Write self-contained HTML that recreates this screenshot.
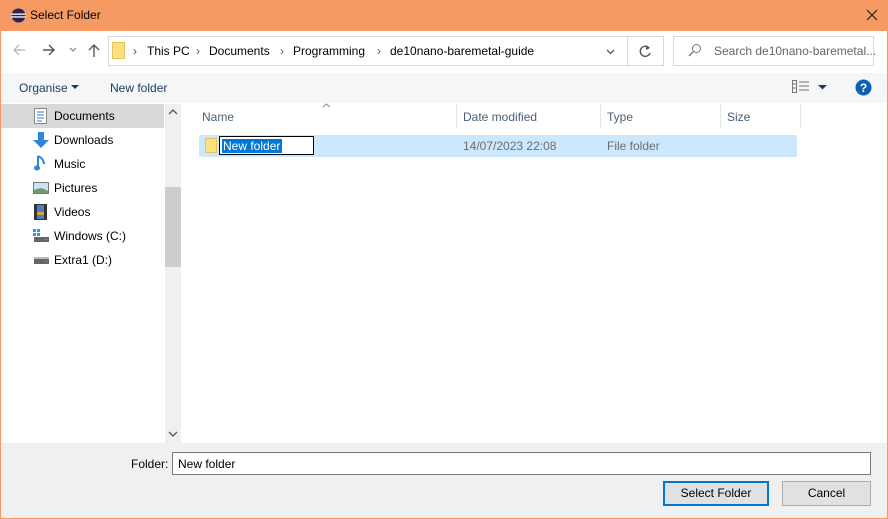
<!DOCTYPE html>
<html><head><style>
*{box-sizing:border-box;margin:0;padding:0}
body{width:888px;height:519px;overflow:hidden;font-family:"Liberation Sans",sans-serif;font-size:12px;color:#000;background:#f69a64;position:relative}
.a{position:absolute}
</style></head><body>
<div class="a" style="left:1px;top:31px;width:886px;height:487px;background:#fff"></div>
<!-- title -->
<svg class="a" style="left:11px;top:8px" width="15" height="15"><circle cx="7.5" cy="7.5" r="7" fill="#2c2255"/><rect x="0" y="5.5" width="15" height="1.3" fill="#fff"/><rect x="0" y="8.3" width="15" height="1.3" fill="#fff"/></svg>
<div class="a" style="left:30px;top:8px;font-size:12px">Select Folder</div>
<svg class="a" style="left:866px;top:9px" width="12" height="12"><path d="M1 1L11 11M11 1L1 11" stroke="#222" stroke-width="1.2"/></svg>
<!-- nav -->
<svg class="a" style="left:12px;top:43px" width="14" height="14"><path d="M13 7H2M7 2L2 7l5 5" stroke="#bbb" stroke-width="1.4" fill="none"/></svg>
<svg class="a" style="left:42px;top:43px" width="14" height="14"><path d="M1 7h11M7 2l5 5-5 5" stroke="#555" stroke-width="1.4" fill="none"/></svg>
<svg class="a" style="left:69px;top:47px" width="8" height="5"><path d="M1 1l3 3 3-3" stroke="#777" fill="none"/></svg>
<svg class="a" style="left:87px;top:43px" width="14" height="15"><path d="M7 14V2M2 7l5-5 5 5" stroke="#555" stroke-width="1.4" fill="none"/></svg>
<div class="a" style="left:108px;top:36px;width:556px;height:30px;border:1px solid #d9d9d9"></div>
<div class="a" style="left:627px;top:36px;width:1px;height:30px;background:#d9d9d9"></div>
<div class="a" style="left:112px;top:42px;width:13px;height:17px;background:#fbe27f;border:1px solid #e3c35a"></div>
<div class="a" style="left:133px;top:44px;color:#555">›</div>
<div class="a" style="left:147px;top:44px">This PC</div>
<div class="a" style="left:196px;top:44px;color:#555">›</div>
<div class="a" style="left:209px;top:44px">Documents</div>
<div class="a" style="left:280px;top:44px;color:#555">›</div>
<div class="a" style="left:293px;top:44px">Programming</div>
<div class="a" style="left:377px;top:44px;color:#555">›</div>
<div class="a" style="left:390px;top:44px">de10nano-baremetal-guide</div>
<svg class="a" style="left:606px;top:49px" width="9" height="6"><path d="M1 1l3.5 3.5L8 1" stroke="#555" stroke-width="1.3" fill="none"/></svg>
<svg class="a" style="left:639px;top:44px" width="13" height="14"><path d="M10 4A5 5 0 1 0 11 9" stroke="#555" stroke-width="1.4" fill="none"/><path d="M7 1l4 3-4 2z" fill="#555"/></svg>
<div class="a" style="left:673px;top:36px;width:201px;height:30px;border:1px solid #d9d9d9"></div>
<svg class="a" style="left:688px;top:43px" width="14" height="14"><circle cx="8.5" cy="5.5" r="4" stroke="#777" fill="none"/><path d="M5.5 8.5L1 13" stroke="#777" stroke-width="1.3"/></svg>
<div class="a" style="left:714px;top:44px;color:#666">Search de10nano-baremetal...</div>
<!-- toolbar -->
<div class="a" style="left:1px;top:73px;width:886px;height:30px;background:#f5f6f7"></div>
<div class="a" style="left:19px;top:81px;color:#1e3a5f">Organise</div>
<svg class="a" style="left:71px;top:85px" width="8" height="5"><path d="M0 0h8L4 4z" fill="#1e3a5f"/></svg>
<div class="a" style="left:110px;top:81px;color:#1e3a5f">New folder</div>
<svg class="a" style="left:792px;top:80px" width="18" height="14"><g stroke="#777" fill="none"><rect x=".5" y=".5" width="4" height="12"/><path d="M7 2h10M7 6h10M7 10h10M1 4h3M1 8h3"/></g></svg>
<svg class="a" style="left:818px;top:85px" width="9" height="5"><path d="M0 0h9L4.5 4.5z" fill="#1e3a5f"/></svg>
<svg class="a" style="left:855px;top:79px" width="17" height="17"><circle cx="8.5" cy="8.5" r="8" fill="#0f5fb3"/><text x="8.5" y="13" font-size="12" font-weight="bold" fill="#fff" text-anchor="middle" font-family="Liberation Sans">?</text></svg>
<!-- left pane -->
<div class="a" style="left:1px;top:104px;width:163px;height:24px;background:#d9d9d9"></div>
<div class="a" style="left:165px;top:104px;width:16px;height:339px;background:#f0f0f0"></div>
<div class="a" style="left:165px;top:187px;width:16px;height:80px;background:#cdcdcd"></div>
<svg class="a" style="left:168px;top:109px" width="10" height="6"><path d="M1 5l4-4 4 4" stroke="#555" stroke-width="1.3" fill="none"/></svg>
<svg class="a" style="left:168px;top:431px" width="10" height="6"><path d="M1 1l4 4 4-4" stroke="#555" stroke-width="1.3" fill="none"/></svg>
<svg class="a" style="left:34px;top:108px" width="14" height="17"><rect x=".5" y=".5" width="12" height="15" fill="#fff" stroke="#888"/><path d="M3 4h7M3 7h7M3 10h7M3 13h5" stroke="#3a7bd5"/></svg>
<div class="a" style="left:54px;top:109px">Documents</div>
<svg class="a" style="left:33px;top:132px" width="16" height="17"><path d="M5 0h6v8h5l-8 8-8-8h5z" fill="#2f86d8"/></svg>
<div class="a" style="left:54px;top:133px">Downloads</div>
<svg class="a" style="left:34px;top:155px" width="12" height="17"><path d="M4 1v12" stroke="#2f86d8" stroke-width="2"/><ellipse cx="3" cy="13" rx="3" ry="2.5" fill="#2f86d8"/><path d="M4 1q6 3 6 8" stroke="#2f86d8" stroke-width="2" fill="none"/></svg>
<div class="a" style="left:54px;top:157px">Music</div>
<svg class="a" style="left:33px;top:182px" width="16" height="12"><rect x=".5" y=".5" width="15" height="11" fill="#cfe3ef" stroke="#777"/><path d="M1 8q7-4 14 1v2H1z" fill="#6d9a7a"/></svg>
<div class="a" style="left:54px;top:181px">Pictures</div>
<svg class="a" style="left:34px;top:204px" width="13" height="16"><rect width="13" height="16" fill="#333"/><rect x="3" y="1" width="7" height="14" fill="#4a7fc1"/><rect x="3" y="8" width="7" height="3" fill="#d9a13a"/></svg>
<div class="a" style="left:54px;top:205px">Videos</div>
<svg class="a" style="left:33px;top:229px" width="16" height="14"><rect x="0" y="0" width="3" height="3" fill="#1ea0e8"/><rect x="4" y="0" width="3" height="3" fill="#1ea0e8"/><rect x="0" y="4" width="3" height="3" fill="#1ea0e8"/><rect x="4" y="4" width="3" height="3" fill="#1ea0e8"/><rect x="1" y="8" width="15" height="5" fill="#666"/><rect x="12" y="10" width="2" height="1" fill="#3c3"/></svg>
<div class="a" style="left:54px;top:229px">Windows (C:)</div>
<svg class="a" style="left:33px;top:256px" width="16" height="9"><rect x="1" y="2" width="15" height="6" fill="#666"/><rect x="1" y="1" width="15" height="2" fill="#bbb"/><rect x="12" y="5" width="2" height="1" fill="#3c3"/></svg>
<div class="a" style="left:54px;top:253px">Extra1 (D:)</div>
<!-- content -->
<div class="a" style="left:456px;top:104px;width:1px;height:25px;background:#e5e5e5"></div>
<div class="a" style="left:600px;top:104px;width:1px;height:25px;background:#e5e5e5"></div>
<div class="a" style="left:720px;top:104px;width:1px;height:25px;background:#e5e5e5"></div>
<div class="a" style="left:800px;top:104px;width:1px;height:25px;background:#e5e5e5"></div>
<svg class="a" style="left:322px;top:103px" width="9" height="5"><path d="M1 4l3.5-3L8 4" stroke="#888" fill="none"/></svg>
<div class="a" style="left:202px;top:110px;color:#4c607a">Name</div>
<div class="a" style="left:463px;top:110px;color:#4c607a">Date modified</div>
<div class="a" style="left:607px;top:110px;color:#4c607a">Type</div>
<div class="a" style="left:727px;top:110px;color:#4c607a">Size</div>
<div class="a" style="left:199px;top:135px;width:598px;height:22px;background:#cce8ff"></div>
<div class="a" style="left:205px;top:138px;width:12px;height:15px;background:#fbe27f;border:1px solid #e3c35a"></div>
<div class="a" style="left:219px;top:136px;width:95px;height:19px;border:1px solid #000;background:#fff"></div>
<div class="a" style="left:222px;top:139px;height:14px;width:60px;background:#0078d7"></div>
<div class="a" style="left:223px;top:139px;color:#fff">New folder</div>
<div class="a" style="left:463px;top:139px;color:#6d6d6d">14/07/2023 22:08</div>
<div class="a" style="left:607px;top:139px;color:#6d6d6d">File folder</div>
<!-- bottom -->
<div class="a" style="left:1px;top:443px;width:886px;height:75px;background:#f0f0f0"></div>
<div class="a" style="left:131px;top:457px">Folder:</div>
<div class="a" style="left:172px;top:452px;width:699px;height:23px;border:1px solid #7a7a7a;background:#fff"></div>
<div class="a" style="left:178px;top:457px">New folder</div>
<div class="a" style="left:663px;top:481px;width:106px;height:25px;border:2px solid #0078d7;background:#e1e1e1"></div>
<div class="a" style="left:663px;top:486px;width:106px;text-align:center">Select Folder</div>
<div class="a" style="left:782px;top:481px;width:89px;height:25px;border:1px solid #adadad;background:#e1e1e1"></div>
<div class="a" style="left:782px;top:486px;width:89px;text-align:center">Cancel</div>
</body></html>
